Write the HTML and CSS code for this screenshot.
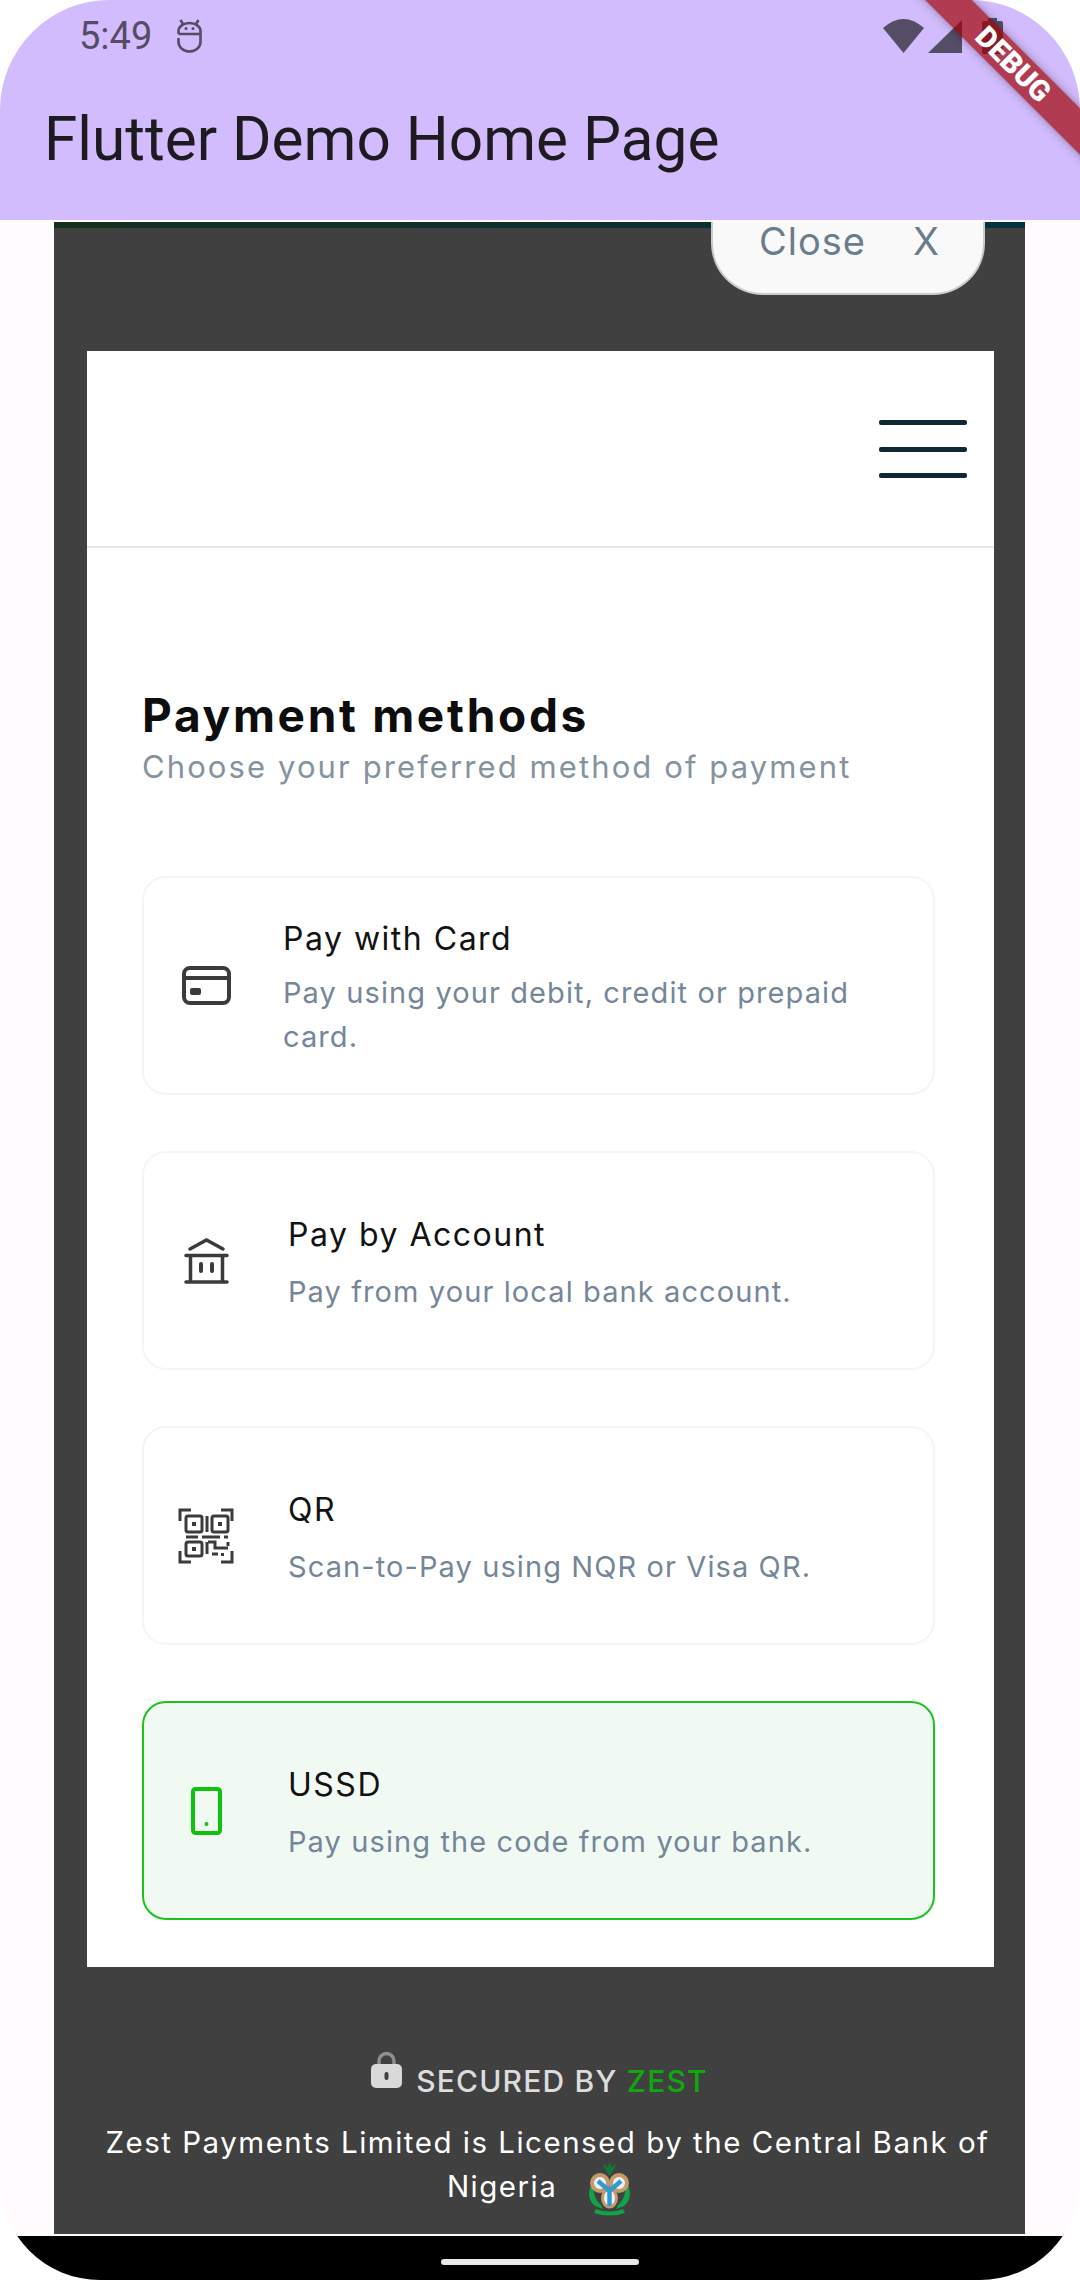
FILE: index.html
```html
<!DOCTYPE html>
<html lang="en">

<head>
    <meta charset="UTF-8">
    <meta name="viewport" content="width=device-width, initial-scale=1.0">
    <title>Flutter Demo Home Page</title>

    <link rel="stylesheet" href="styles.css">
</head>

<body>

    <div class="phone">
        <div class="screen">

            <!-- App bar with status bar -->
            <header class="app-bar">
                <div class="status-bar">
                    <span class="clock">5:49</span>
                    <svg class="debug-glyph" width="25" height="34" viewBox="0 0 25 34" fill="none" stroke="#554c66" stroke-width="2.600">
                        <path d="M3.500 1l2.500 4M21.500 1l-2.500 4"/>
                        <path d="M1.500 15V12a11 8 0 0 1 22 0v3H1.500"/>
                        <path d="M23.500 15v8a11 9.500 0 0 1-22 0v-4"/>
                        <circle cx="9" cy="9.500" r="1.500" fill="#554c66" stroke="none"/>
                        <circle cx="16" cy="9.500" r="1.500" fill="#554c66" stroke="none"/>
                    </svg>
                    <div class="status-icons">
                        <svg width="41" height="34" viewBox="0 0 41 34"><path d="M0 9Q20.500-9 41 9L20.500 34z" fill="#554c66"/></svg>
                        <svg width="34" height="34" viewBox="0 0 34 34"><path d="M34 1V34H0z" fill="#554c66"/></svg>
                        <svg class="battery" width="21" height="36" viewBox="0 0 21 36"><path d="M6 0h9v3h4a2 2 0 0 1 2 2v29a2 2 0 0 1-2 2H2a2 2 0 0 1-2-2V5a2 2 0 0 1 2-2h4z" fill="#554c66"/></svg>
                    </div>
                </div>
                <h1 class="app-title">Flutter Demo Home Page</h1>
            </header>

            <!-- Checkout modal -->
            <main class="content">
                <div class="panel">
                    <div class="panel-stripe"></div>
                    <div class="close-btn"><span>Close</span><span>X</span></div>

                    <div class="sheet">
                        <div class="sheet-head">
                            <div class="burger"><i></i><i></i><i></i></div>
                        </div>

                        <div class="sheet-body">
                            <h2 class="methods-title">Payment methods</h2>
                            <p class="methods-sub">Choose your preferred method of payment</p>

                            <div class="method-list">
                                <div class="method method-card">
                                    <div class="method-icon">
                                        <svg width="49" height="39" viewBox="0 0 49 39" fill="none" stroke="#3b3b3b" stroke-width="4">
                                            <rect x="2" y="2" width="45" height="35" rx="6"/>
                                            <path d="M2 12h45"/>
                                            <rect x="8" y="22" width="11" height="7" rx="2" fill="#3b3b3b" stroke="none"/>
                                        </svg>
                                    </div>
                                    <div class="method-text">
                                        <div class="method-name">Pay with Card</div>
                                        <div class="method-desc">Pay using your debit, credit or prepaid<br>card.</div>
                                    </div>
                                </div>

                                <div class="method">
                                    <div class="method-icon">
                                        <svg width="45" height="46" viewBox="0 0 45 46" fill="none" stroke="#3b3b3b" stroke-width="3.500" stroke-linecap="round">
                                            <path d="M6 11L22.500 2 39 11"/>
                                            <path d="M2 17.500h41M2 44h41M6.500 18v25M38.500 18v25"/>
                                            <path d="M17 26v7M28 26v7" stroke-width="4"/>
                                        </svg>
                                    </div>
                                    <div class="method-text">
                                        <div class="method-name">Pay by Account</div>
                                        <div class="method-desc">Pay from your local bank account.</div>
                                    </div>
                                </div>

                                <div class="method">
                                    <div class="method-icon">
                                        <svg width="56" height="56" viewBox="0 0 56 56" fill="none" stroke="#3b3b3b" stroke-width="3">
                                            <path d="M13 2H2V13M43 2H54V13M13 54H2V43M43 54H54V43"/>
                                            <rect x="8" y="8" width="16" height="16" rx="2"/>
                                            <rect x="34" y="8" width="16" height="16" rx="2"/>
                                            <rect x="8" y="34" width="16" height="14" rx="2"/>
                                            <path d="M29 8V24M8 29H20M24 29H42M46 29H50M30 34H37V40H50M29 34V46M34 46H40M50 34V38"/>
                                            <rect x="14" y="14" width="4" height="4" fill="#3b3b3b" stroke="none"/>
                                            <rect x="40" y="14" width="4" height="4" fill="#3b3b3b" stroke="none"/>
                                            <rect x="14" y="39" width="4" height="4" fill="#3b3b3b" stroke="none"/>
                                            <rect x="43" y="45" width="3" height="3" fill="#3b3b3b" stroke="none"/>
                                        </svg>
                                    </div>
                                    <div class="method-text">
                                        <div class="method-name">QR</div>
                                        <div class="method-desc">Scan-to-Pay using NQR or Visa QR.</div>
                                    </div>
                                </div>

                                <div class="method method-active">
                                    <div class="method-icon">
                                        <svg width="31" height="48" viewBox="0 0 31 48" fill="none" stroke="#10c210" stroke-width="4">
                                            <rect x="2" y="2" width="27" height="44" rx="2.500"/>
                                            <circle cx="15.500" cy="37" r="2" fill="#10c210" stroke="none"/>
                                        </svg>
                                    </div>
                                    <div class="method-text">
                                        <div class="method-name">USSD</div>
                                        <div class="method-desc">Pay using the code from your bank.</div>
                                    </div>
                                </div>
                            </div>
                        </div>
                    </div>

                    <!-- Footer -->
                    <div class="secured">
                        <svg class="lock" width="31" height="37" viewBox="0 0 31 37" fill="none">
                            <path d="M8 16V10a7.500 7.500 0 0 1 15 0v6" stroke="#8f8f8f" stroke-width="3.500"/>
                            <rect y="13" width="31" height="24" rx="5" fill="#d9d9d9"/>
                            <rect x="13.500" y="21" width="4" height="8" rx="2" fill="#404040"/>
                        </svg>
                        <span>SECURED BY <span class="zest">ZEST</span></span>
                    </div>
                    <p class="licence">
                        <span class="licence-first">Zest Payments Limited is Licensed by the Central Bank of</span>
                        Nigeria
                        <svg class="cbn" width="45" height="54" viewBox="0 0 45 54" fill="none">
                            <path d="M22 13C19 8 17 6 16 2c3 1 4 2 5 4 0-2 1-4 2-6 1 2 1 4 1 6 1-2 3-3 5-4-1 4-3 7-6 11z" fill="#0d7a3c"/>
                            <path d="M6 20C1 27 0 38 8 44l8 3-2-4C8 38 6 30 6 20zM39 20c5 7 6 18-2 24l-8 3 2-4c6-5 8-13 8-23z" fill="#12a24a"/>
                            <path d="M9 47q13 5 27 0l2 4q-15 5-31 0z" fill="#12a24a"/>
                            <circle cx="13" cy="21" r="8" stroke="#c29a6b" stroke-width="4" fill="#f1f1f1"/>
                            <circle cx="32" cy="21" r="8" stroke="#c29a6b" stroke-width="4" fill="#f1f1f1"/>
                            <ellipse cx="22.500" cy="36" rx="7" ry="9" stroke="#c29a6b" stroke-width="3" fill="#f1f1f1"/>
                            <path d="M11 19l11.500 10L34 19M22.500 29v15" stroke="#2f9bd3" stroke-width="4.500"/>
                        </svg>
                    </p>
                </div>
            </main>

            <!-- Navigation bar -->
            <footer class="nav-bar"><div class="home-pill"></div></footer>
        </div>

        <div class="debug-band">DEBUG</div>
    </div>

</body>

</html>
```

FILE: styles.css
```css
/* General Styling */
* {
    box-sizing: border-box;
}

body {
    margin: 0;
    background-color: #ffffff;
    font-family: 'Inter', 'Noto Sans', sans-serif;
}

h1,
h2,
p {
    margin: 0;
}

/* Phone and Screen */
.phone {
    position: relative;
    width: 1080px;
    height: 2280px;
    overflow: hidden;
}

.screen {
    display: flex;
    flex-direction: column;
    height: 100%;
    overflow: hidden;
    border-radius: 110px 110px 100px 100px;
    background-color: #fffbfe;
}

/* App Bar */
.app-bar {
    flex: none;
    height: 220px;
    background-color: #d3bcfd;
}

.status-bar {
    display: flex;
    align-items: center;
    height: 72px;
    padding: 0 77px 0 79px;
    color: #554c66;
}

.clock {
    font-family: 'Roboto', sans-serif;
    font-size: 38px;
}

.debug-glyph {
    margin-left: 25px;
}

.status-icons {
    display: flex;
    align-items: center;
    gap: 4px;
    margin-left: auto;
}

.battery {
    margin-left: 16px;
}

.app-title {
    padding: 38px 0 0 44px;
    font-family: 'Roboto', sans-serif;
    font-size: 60.300px;
    font-weight: 400;
    line-height: 60px;
    color: #1d1b20;
}

/* Debug ribbon */
.debug-band {
    position: absolute;
    top: 48px;
    left: 883px;
    width: 260px;
    height: 33px;
    transform: rotate(45deg);
    background-color: rgba(160, 0, 0, 0.68);
    box-shadow: 0 0 10px rgba(0, 0, 0, 0.35);
    color: #ffffff;
    font-family: 'Roboto', sans-serif;
    font-size: 29px;
    font-weight: 900;
    line-height: 33px;
    text-align: center;
}

/* Panel */
.content {
    flex: 1;
    display: flex;
    min-height: 0;
    padding: 2px 55px 0 54px;
}

.panel {
    position: relative;
    flex: 1;
    background-color: #404040;
}

.panel-stripe {
    height: 6px;
    background: linear-gradient(90deg, #16301f, #05303f);
}

.close-btn {
    position: absolute;
    top: 0;
    right: 40px;
    display: flex;
    justify-content: space-between;
    align-items: flex-start;
    width: 274px;
    height: 73px;
    padding: 0 43px 0 46px;
    border: 2px solid #c9cdd0;
    border-top: none;
    border-radius: 0 0 52px 52px;
    background-color: #f9f9f9;
    color: #6b7c8c;
    font-size: 38px;
    line-height: 38px;
    letter-spacing: 1px;
}

/* White sheet */
.sheet {
    margin: 123px 31px 0 33px;
    height: 1616px;
    background-color: #ffffff;
}

.sheet-head {
    display: flex;
    justify-content: flex-end;
    height: 197px;
    padding: 69px 27px 0 0;
    border-bottom: 2px solid #e6e6e6;
}

.burger {
    display: flex;
    flex-direction: column;
    gap: 21.500px;
    width: 88px;
}

.burger i {
    display: block;
    height: 5px;
    border-radius: 2px;
    background-color: #0e2730;
}

.sheet-body {
    padding: 141px 59px 0 55px;
}

.methods-title {
    font-size: 46px;
    font-weight: 700;
    line-height: 52px;
    letter-spacing: 2.700px;
    color: #0d0d0d;
}

.methods-sub {
    margin-top: 4px;
    font-size: 31px;
    line-height: 44px;
    letter-spacing: 2.100px;
    color: #8593a0;
}

/* Method cards */
.method-list {
    display: flex;
    flex-direction: column;
    gap: 56px;
    margin-top: 87px;
}

.method {
    display: flex;
    align-items: center;
    height: 219px;
    padding-top: 5px;
    border: 2px solid #f4f5f8;
    border-radius: 24px;
}

.method-active {
    border-color: #1ac41a;
    background-color: #f1faf2;
}

.method-icon {
    flex: none;
    display: flex;
    justify-content: center;
    width: 124px;
    margin-top: -5px;
}

.method-text {
    margin-left: 20px;
}

.method-name {
    font-size: 32px;
    line-height: 44px;
    letter-spacing: 1.500px;
    color: #121212;
}

.method-desc {
    margin-top: 13px;
    font-size: 29px;
    line-height: 44px;
    letter-spacing: 1.100px;
    color: #75869a;
}

.method-card .method-text {
    margin-left: 15px;
}

.method-card .method-desc {
    margin-top: 10px;
}

/* Footer */
.secured {
    display: flex;
    align-items: flex-end;
    justify-content: center;
    margin-top: 84px;
    font-size: 30px;
    font-weight: 500;
    line-height: 32px;
    letter-spacing: 1.200px;
    color: #dcdcdc;
}

.lock {
    margin: 0 14px 9px 0;
}

.zest {
    color: #0fa80f;
}

.licence {
    margin-top: 23px;
    font-size: 29.500px;
    line-height: 44px;
    letter-spacing: 1.500px;
    text-align: center;
    color: #ffffff;
}

.licence-first {
    display: block;
    padding-left: 16px;
}

.cbn {
    margin: -10px 0 -10px 20px;
    vertical-align: middle;
}

/* Navigation Bar */
.nav-bar {
    flex: none;
    display: flex;
    justify-content: center;
    height: 46px;
    padding-top: 23px;
    border-top: 2px solid #ffffff;
    background-color: #000000;
}

.home-pill {
    width: 198px;
    height: 6px;
    border-radius: 3px;
    background-color: #e9e9e9;
}
```
